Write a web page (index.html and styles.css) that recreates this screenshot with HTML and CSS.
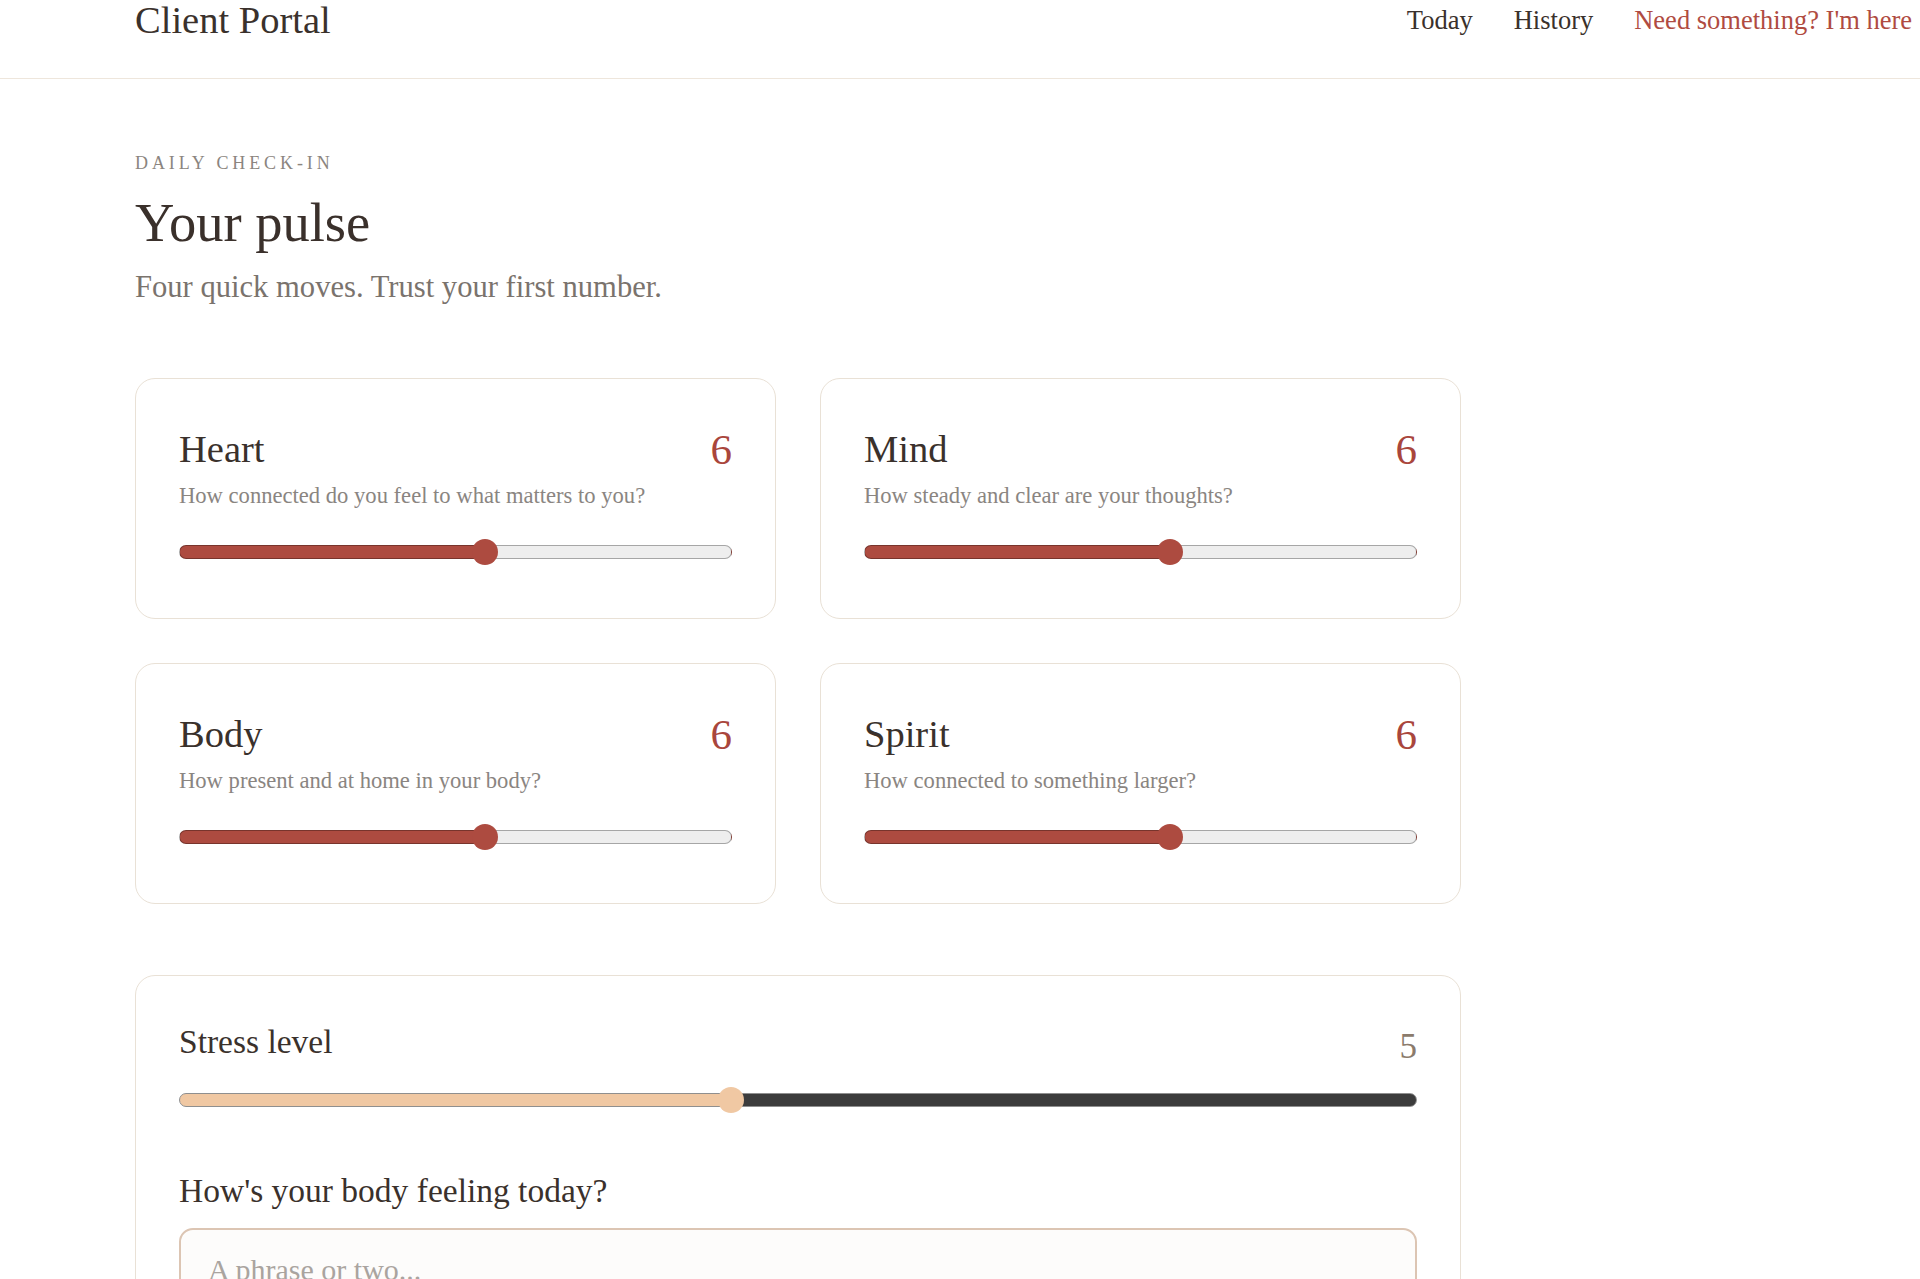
FILE: index.html
```html
<!DOCTYPE html>
<html lang="en">
<head>
<meta charset="utf-8">
<title>Client Portal — Daily check-in</title>
<link rel="stylesheet" href="styles.css">
</head>
<body>
<header class="topbar">
  <div class="brand">Client Portal</div>
  <nav class="nav">
    <a class="nav-link" href="#">Today</a>
    <a class="nav-link" href="#">History</a>
    <a class="nav-link nav-help" href="#">Need something? I'm here</a>
  </nav>
</header>

<main class="page">
  <p class="eyebrow">DAILY CHECK-IN</p>
  <h1 class="title">Your pulse</h1>
  <p class="lede">Four quick moves. Trust your first number.</p>

  <section class="grid">
    <div class="card">
      <div class="card-head">
        <h2 class="card-title">Heart</h2>
        <span class="card-value">6</span>
      </div>
      <p class="card-q">How connected do you feel to what matters to you?</p>
      <input class="range range-red" type="range" min="1" max="10" value="6" style="--f:0.5556">
    </div>
    <div class="card">
      <div class="card-head">
        <h2 class="card-title">Mind</h2>
        <span class="card-value">6</span>
      </div>
      <p class="card-q">How steady and clear are your thoughts?</p>
      <input class="range range-red" type="range" min="1" max="10" value="6" style="--f:0.5556">
    </div>
    <div class="card">
      <div class="card-head">
        <h2 class="card-title">Body</h2>
        <span class="card-value">6</span>
      </div>
      <p class="card-q">How present and at home in your body?</p>
      <input class="range range-red" type="range" min="1" max="10" value="6" style="--f:0.5556">
    </div>
    <div class="card">
      <div class="card-head">
        <h2 class="card-title">Spirit</h2>
        <span class="card-value">6</span>
      </div>
      <p class="card-q">How connected to something larger?</p>
      <input class="range range-red" type="range" min="1" max="10" value="6" style="--f:0.5556">
    </div>
  </section>

  <section class="panel">
    <div class="panel-head">
      <h2 class="panel-title">Stress level</h2>
      <span class="panel-value">5</span>
    </div>
    <input class="range range-stress" type="range" min="1" max="10" value="5" style="--f:0.4444">
    <h3 class="panel-q">How's your body feeling today?</h3>
    <input class="phrase" type="text" placeholder="A phrase or two...">
  </section>
</main>
</body>
</html>
```

FILE: styles.css
```css
* { box-sizing: border-box; }

html, body {
  margin: 0;
  padding: 0;
  background: #ffffff;
}

body {
  font-family: "Liberation Serif", "Times New Roman", serif;
  color: #3a312c;
}

/* ---------- top bar ---------- */
.topbar {
  display: flex;
  justify-content: space-between;
  align-items: flex-start;
  height: 79px;
  padding: 0 8px 0 135px;
  border-bottom: 1px solid #eee6dc;
}

.brand {
  font-size: 38.5px;
  line-height: 40px;
  color: #3a312c;
}

.nav {
  display: flex;
  gap: 41px;
  font-size: 26.5px;
  line-height: 40px;
}

.nav-link {
  color: #3a312c;
  text-decoration: none;
}

.nav-help {
  color: #b04b41;
}

/* ---------- page ---------- */
.page {
  padding: 72px 0 0 135px;
  width: 1461px;
}

.eyebrow {
  margin: 0;
  font-size: 18px;
  line-height: 24px;
  letter-spacing: 3.9px;
  color: #8b8580;
}

.title {
  margin: 16px 0 0;
  font-size: 54.5px;
  line-height: 64px;
  font-weight: normal;
  color: #3a302b;
}

.lede {
  margin: 12px 0 0;
  font-size: 30.6px;
  line-height: 40px;
  color: #7a736d;
}

/* ---------- cards ---------- */
.grid {
  margin-top: 71px;
  display: grid;
  grid-template-columns: 641px 641px;
  gap: 44px;
}

.card {
  border: 1px solid #e9e1d6;
  border-radius: 20px;
  padding: 48px 43px 53px;
  background: #ffffff;
}

.card-head {
  display: flex;
  justify-content: space-between;
  align-items: flex-start;
}

.card-title {
  margin: 0;
  font-size: 38.5px;
  line-height: 44px;
  font-weight: normal;
  color: #3a312c;
}

.card-value {
  margin-top: 1px;
  font-size: 43px;
  line-height: 44px;
  color: #a9463c;
}

.card-q {
  margin: 9px 0 28px;
  font-size: 22.6px;
  line-height: 30px;
  color: #8a8581;
}

/* ---------- range sliders ---------- */
.range {
  -webkit-appearance: none;
  appearance: none;
  display: block;
  width: 100%;
  height: 26px;
  margin: 0;
  padding: 0;
  background: transparent;
}

.range-red {
  --fill: #ad4b40;
  --rest: #eeeeee;
  --edge: rgba(0, 0, 0, 0.3);
}

.range-stress {
  --fill: #f0c8a3;
  --rest: #3c3c3c;
  --edge: #8f8f8f;
}

.range::-webkit-slider-runnable-track {
  box-sizing: content-box;
  height: 12px;
  border: 1px solid var(--edge);
  border-radius: 8px;
  background: linear-gradient(to right,
    var(--fill) 0,
    var(--fill) calc(12px + (100% - 24px) * var(--f)),
    var(--rest) calc(12px + (100% - 24px) * var(--f)),
    var(--rest) 100%);
}

.range::-webkit-slider-thumb {
  -webkit-appearance: none;
  appearance: none;
  box-sizing: border-box;
  width: 26px;
  height: 26px;
  border: none;
  border-radius: 50%;
  background: var(--fill);
  margin-top: -7px;
}

/* ---------- stress panel ---------- */
.panel {
  margin-top: 71px;
  border: 1px solid #e9e1d6;
  border-radius: 20px;
  padding: 46px 43px 40px;
  background: #ffffff;
}

.panel-head {
  display: flex;
  justify-content: space-between;
  align-items: flex-start;
  margin-bottom: 20px;
}

.panel-title {
  margin: 0;
  font-size: 33.5px;
  line-height: 40px;
  font-weight: normal;
  color: #3a312c;
}

.panel-value {
  margin-top: 5px;
  font-size: 35px;
  line-height: 40px;
  color: #8b7b6c;
}

.panel-q {
  margin: 58px 0 17px;
  font-size: 33.5px;
  line-height: 40px;
  font-weight: normal;
  color: #3a312c;
}

.phrase {
  display: block;
  width: 100%;
  padding: 23px 27px;
  border: 2px solid #dcc5b3;
  border-radius: 14px;
  background: #fdfcfb;
  font-family: "Liberation Serif", "Times New Roman", serif;
  font-size: 30px;
  color: #3a312c;
}

.phrase::placeholder {
  color: #aaa49f;
}
```
